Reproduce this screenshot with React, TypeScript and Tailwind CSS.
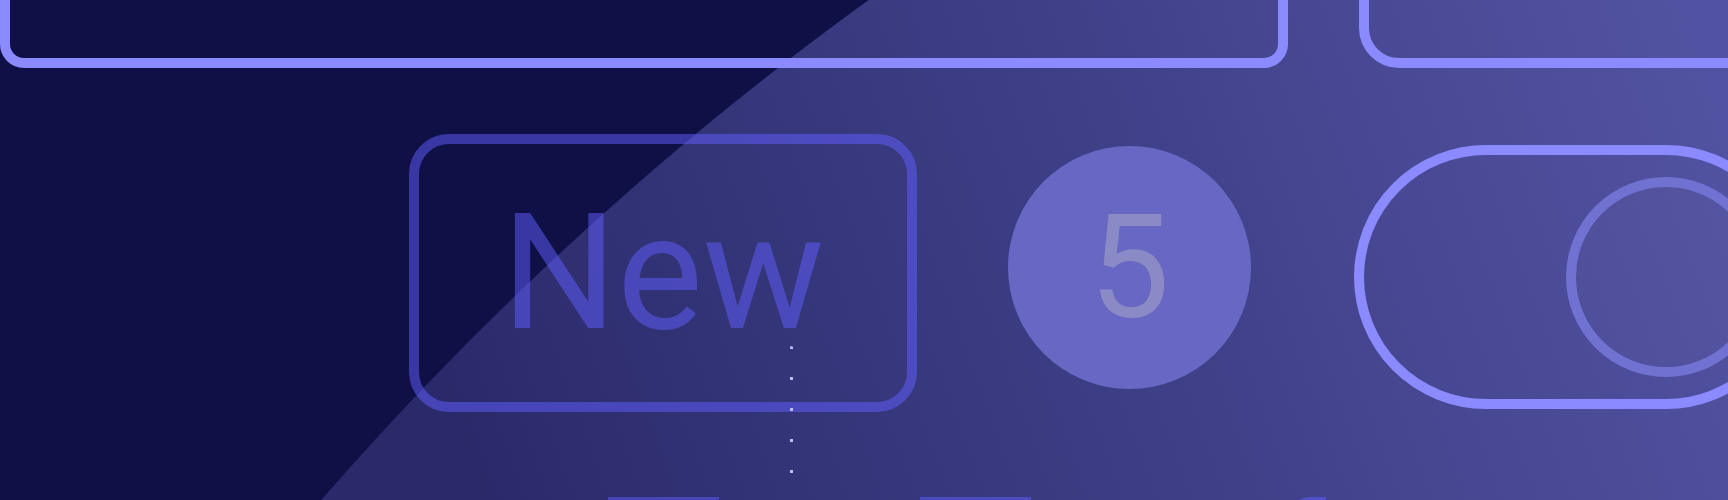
import React from 'react';

const frame = 'shrink-0 border-[10px] border-[#8b8bff]';

export default function App() {
  return (
    <div className="relative h-[500px] w-[1728px] overflow-hidden bg-[#0f1046] bg-[image:radial-gradient(circle_3248px_at_2771px_2632px,transparent_3247px,#0f1046_3248px),linear-gradient(70deg,#2a2a6b_458px,#5252a2_1751px)] font-[Roboto,sans-serif]">
      {/* cards cut off by the top edge */}
      <div className="flex h-[68px] items-end gap-[71px]">
        <div className={`${frame} h-[160px] w-[1288px] rounded-[24px]`} />
        <div className={`${frame} h-[160px] w-[500px] rounded-[40px]`} />
      </div>

      <div className="mt-[66px] flex items-start pl-[409px]">
        <span className="flex h-[278px] w-[508px] shrink-0 items-center justify-center rounded-[40px] border-[10px] border-indigo-500/50 text-[162px] leading-none text-indigo-500/50">
          New
        </span>

        <span className="ml-[91px] mt-[12px] flex h-[243px] w-[243px] shrink-0 items-center justify-center rounded-full bg-[#6868c4] text-[144px] leading-none text-[#8a8ac6]">
          5
        </span>

        <button
          type="button"
          aria-pressed="true"
          className={`${frame} ml-[103px] mt-[11px] flex h-[264px] w-[444px] items-center justify-end rounded-full pr-[22px]`}
        >
          <span className="h-[200px] w-[200px] rounded-full border-[10px] border-[#7171d2] bg-white/[0.02]" />
        </button>
      </div>

      {/* tops of the next row */}
      <div className="mt-[85px] flex">
        <div className="ml-[608px] h-[20px] w-[111px] shrink-0 bg-indigo-500/50" />
        <div className="ml-[201px] h-[20px] w-[111px] shrink-0 bg-indigo-500/50" />
        <div className="ml-[259px] h-[20px] w-[36px] shrink-0 rounded-tl-[26px] bg-indigo-500/50" />
      </div>

      <div className="absolute left-[790px] top-[346px] h-[160px] w-[3px] rounded-full bg-[image:repeating-linear-gradient(to_bottom,#bdbdf2_0_3px,transparent_3px_31px)]" />
    </div>
  );
}
